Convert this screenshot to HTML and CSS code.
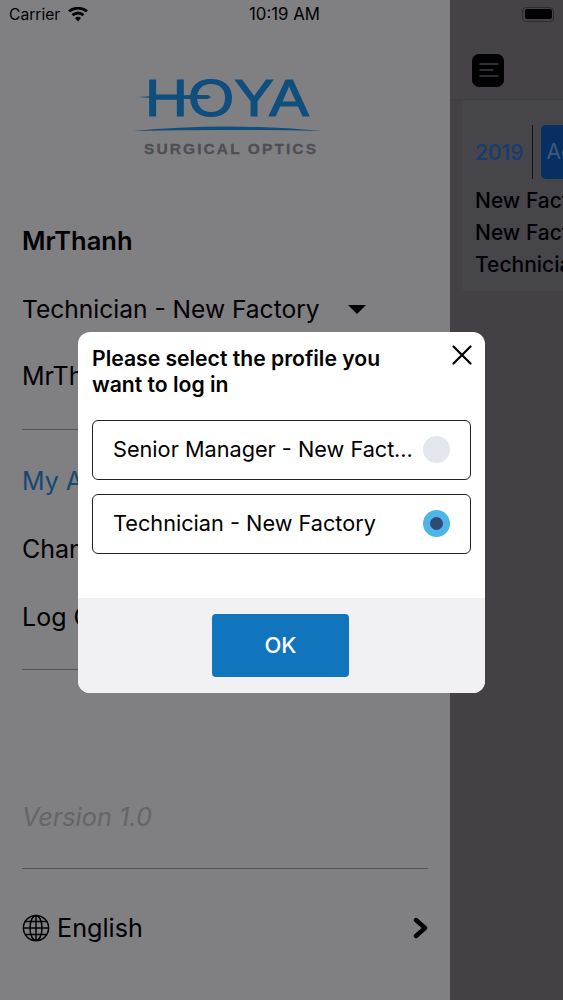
FILE: index.html
```html
<!DOCTYPE html>
<html lang="en">
<head>
<meta charset="utf-8">
<title>Profile select</title>
<link rel="stylesheet" href="styles.css">
</head>
<body>
<div class="app">
  <aside class="drawer">
    <div class="logo">
      <svg class="logo-svg" width="200" height="100" viewBox="0 0 200 100">
        <text class="logo-hoya" x="15" y="51" textLength="164" lengthAdjust="spacingAndGlyphs">HOYA</text>
        <path class="logo-flare" d="M8 32 Q40 29.5 78 30 L81 32 L78 34 Q40 34.5 8 32Z"/>
        <path class="logo-flare" d="M3 66 Q96 57 192 66 Q96 64 3 66Z"/>
        <text class="logo-sub" x="14" y="89" textLength="172">SURGICAL OPTICS</text>
      </svg>
    </div>
    <div class="name">MrThanh</div>
    <div class="row role"><span>Technician - New Factory</span><span class="caret"></span></div>
    <div class="row user">MrThanh</div>
    <hr class="rule rule-a">
    <div class="row blue">My Account</div>
    <div class="row change">Change Password</div>
    <div class="row logout">Log Out</div>
    <hr class="rule rule-b">
    <div class="version">Version 1.0</div>
    <hr class="rule rule-c">
    <div class="lang">
      <svg class="globe" width="28" height="28" viewBox="0 0 28 28" fill="none" stroke="#000" stroke-width="1.5">
        <circle cx="14" cy="14" r="12.6"/>
        <ellipse cx="14" cy="14" rx="6" ry="12.6"/>
        <path d="M14 1.4V26.6M1.4 14H26.6M3.4 7.6H24.6M3.4 20.4H24.6"/>
      </svg>
      <span class="lang-name">English</span>
      <svg class="chev" width="15" height="22" viewBox="0 0 15 22" fill="none" stroke="#000" stroke-width="4.4" stroke-linecap="round" stroke-linejoin="round">
        <path d="M3 3L12 11L3 19"/>
      </svg>
    </div>
  </aside>
  <main class="panel">
    <header class="topbar">
      <div class="menu-btn">
        <svg width="32" height="32" viewBox="0 0 32 32" stroke="#7c7c7c" stroke-width="1.5" stroke-linecap="round">
          <path d="M8 10H26M8 16H21M8 22H26"/>
        </svg>
      </div>
    </header>
    <section class="card">
      <div class="card-top">
        <span class="year">2019</span>
        <span class="sep"></span>
        <span class="tag">Active</span>
      </div>
      <div class="card-line">New Factory</div>
      <div class="card-line">New Factory</div>
      <div class="card-line">Technician</div>
    </section>
  </main>
</div>
<div class="status">
  <div class="status-left">
    <span>Carrier</span>
    <svg width="20" height="15" viewBox="0 0 20 15"><path d="M10 14.5L7 11Q10 8.6 13 11ZM5.4 9.2L3.5 7Q10 1.8 16.5 7L14.6 9.2Q10 5.6 5.4 9.2ZM1.9 5.3L0 3.2Q10-3.6 20 3.2L18.1 5.3Q10-.4 1.9 5.3Z"/></svg>
  </div>
  <div class="status-time">10:19 AM</div>
  <div class="status-right"><div class="battery"><span class="battery-fill"></span></div></div>
</div>
<div class="scrim"></div>
<div class="modal">
  <div class="modal-body">
    <div class="modal-head">
      <h1 class="modal-title">Please select the profile you want to log in</h1>
      <svg class="close" width="20" height="20" viewBox="0 0 20 20" stroke="#000" stroke-width="2.2" stroke-linecap="round"><path d="M1.5 1.5L18.5 18.5M18.5 1.5L1.5 18.5"/></svg>
    </div>
    <div class="option">
      <span class="option-text">Senior Manager - New Factory</span>
      <span class="radio"></span>
    </div>
    <div class="option">
      <span class="option-text">Technician - New Factory</span>
      <span class="radio radio-on"><span class="radio-dot"></span></span>
    </div>
  </div>
  <div class="modal-foot">
    <div class="ok">OK</div>
  </div>
</div>
</body>
</html>
```
FILE: styles.css
```css
* { box-sizing: border-box; }
html, body { margin: 0; padding: 0; }
body {
  width: 563px;
  height: 1000px;
  overflow: hidden;
  position: relative;
  font-family: Inter, "Liberation Sans", sans-serif;
  color: #000;
  background: #fff;
}
.app { display: flex; width: 563px; height: 1000px; }

/* Drawer */
.drawer {
  width: 450px;
  flex: none;
  background: #fff;
  padding: 0 22px;
  display: flex;
  flex-direction: column;
}
.logo { height: 196px; padding: 65px 0 0 108px; }
.logo-svg { display: block; }
.logo-hoya { font: 400 51px "Liberation Sans", sans-serif; fill: #1c9df5; stroke: #1c9df5; stroke-width: 1.2px; }
.logo-flare { fill: #1c9df5; }
.logo-sub { font: 700 15.5px "Liberation Sans", sans-serif; fill: #9c9ca2; stroke: #9c9ca2; stroke-width: 0.3px; }
.name { font-size: 25.5px; font-weight: 600; line-height: 32px; margin-top: 29px; }
.row { font-size: 25px; line-height: 32px; white-space: nowrap; }
.role { display: flex; align-items: center; justify-content: space-between; margin-top: 36px; padding-right: 62px; font-size: 24.55px; }
.caret { width: 0; height: 0; border-left: 9px solid transparent; border-right: 9px solid transparent; border-top: 9px solid #000; }
.user { margin-top: 35px; }
.rule { border: 0; height: 1px; margin: 0; background: #a8a6aa; flex: none; }
.rule-a { margin-top: 37px; }
.blue { color: #2f8fe0; margin-top: 35px; }
.change { margin-top: 36px; }
.logout { margin-top: 36px; }
.rule-b { margin-top: 36px; }
.version { font-size: 25.3px; font-style: italic; line-height: 32px; color: #c4cacd; margin-top: 131px; }
.rule-c { margin-top: 35px; }
.lang { display: flex; align-items: center; margin-top: 43px; }
.globe { flex: none; }
.lang-name { font-size: 25.2px; line-height: 32px; margin-left: 7px; flex: 1; }
.chev { flex: none; }

/* Right panel */
.panel { flex: 1; background: #848387; overflow: hidden; padding-left: 12px; }
.topbar { height: 100px; margin-left: -12px; padding: 54px 0 0 22px; background: #88878b; border-bottom: 1px solid #7e7d81; }
.menu-btn { width: 32px; height: 33px; border-radius: 7px; background: #000; }
.card { width: 200px; height: 191px; background: #8b8a8e; border-radius: 4px 0 0 4px; padding: 25px 0 0 13px; }
.card-top { display: flex; align-items: center; height: 54px; }
.year { font-size: 21px; font-weight: 500; color: #2a78dc; }
.sep { width: 1px; height: 54px; background: #222; margin: 0 8px 0 9px; }
.tag { background: #0a5fbe; color: #7fb0e8; border-radius: 5px; height: 54px; padding: 0 5px; font-size: 21px; line-height: 54px; flex: none; }
.card-line { font-size: 21px; line-height: 32px; white-space: nowrap; font-weight: 500; }
.card-top + .card-line { margin-top: 6px; }

/* Status bar */
.status {
  position: absolute; top: 0; left: 0; width: 563px; height: 30px;
  display: grid; grid-template-columns: 1fr auto 1fr; align-items: center;
  padding: 0 9px 2px 9px; font-size: 15.6px; color: #000;
}
.status-left { display: flex; align-items: center; gap: 8px; }
.status-time { font-size: 16.8px; font-weight: 400; margin-right: -6px; }
.status-right { display: flex; justify-content: flex-end; }
.battery { width: 32px; height: 15px; border: 1px solid #555; border-radius: 4px; padding: 1.5px; }
.battery-fill { display: block; height: 100%; background: #000; border-radius: 2px; }

/* Overlay */
.scrim { position: absolute; inset: 0; background: rgba(2, 0, 6, 0.5); }
.modal {
  position: absolute; left: 78px; top: 332px; width: 407px; height: 361px;
  background: #fff; border-radius: 12px; overflow: hidden;
  display: flex; flex-direction: column;
}
.modal-body { flex: 1; padding: 14px 14px 0; }
.modal-head { display: flex; justify-content: space-between; align-items: flex-start; height: 74px; }
.modal-title { margin: 0; font-size: 21.15px; font-weight: 600; line-height: 26px; width: 320px; }
.close { margin-top: -1px; margin-right: -1px; flex: none; }
.option {
  height: 60px; border: 1.5px solid #222; border-radius: 6px;
  display: flex; align-items: center; padding: 0 20px 2px 20px;
  margin-bottom: 14px; gap: 4px;
}
.option-text { flex: 1; min-width: 0; font-size: 21.7px; white-space: nowrap; overflow: hidden; text-overflow: ellipsis; }
.radio { width: 27px; height: 27px; border-radius: 50%; background: #e3e7ed; flex: none; display: flex; align-items: center; justify-content: center; }
.radio-on { background: #4db5e8; }
.radio-dot { width: 13px; height: 13px; border-radius: 50%; background: #2f4a73; }
.modal-foot { height: 95px; background: #f1f1f3; display: flex; justify-content: center; padding: 16px 2px 0 0; flex: none; }
.ok {
  width: 137px; height: 63px; border-radius: 4px; background: #1175bd; color: #fff;
  font-size: 22px; font-weight: 500; line-height: 63px; text-align: center;
}
```
